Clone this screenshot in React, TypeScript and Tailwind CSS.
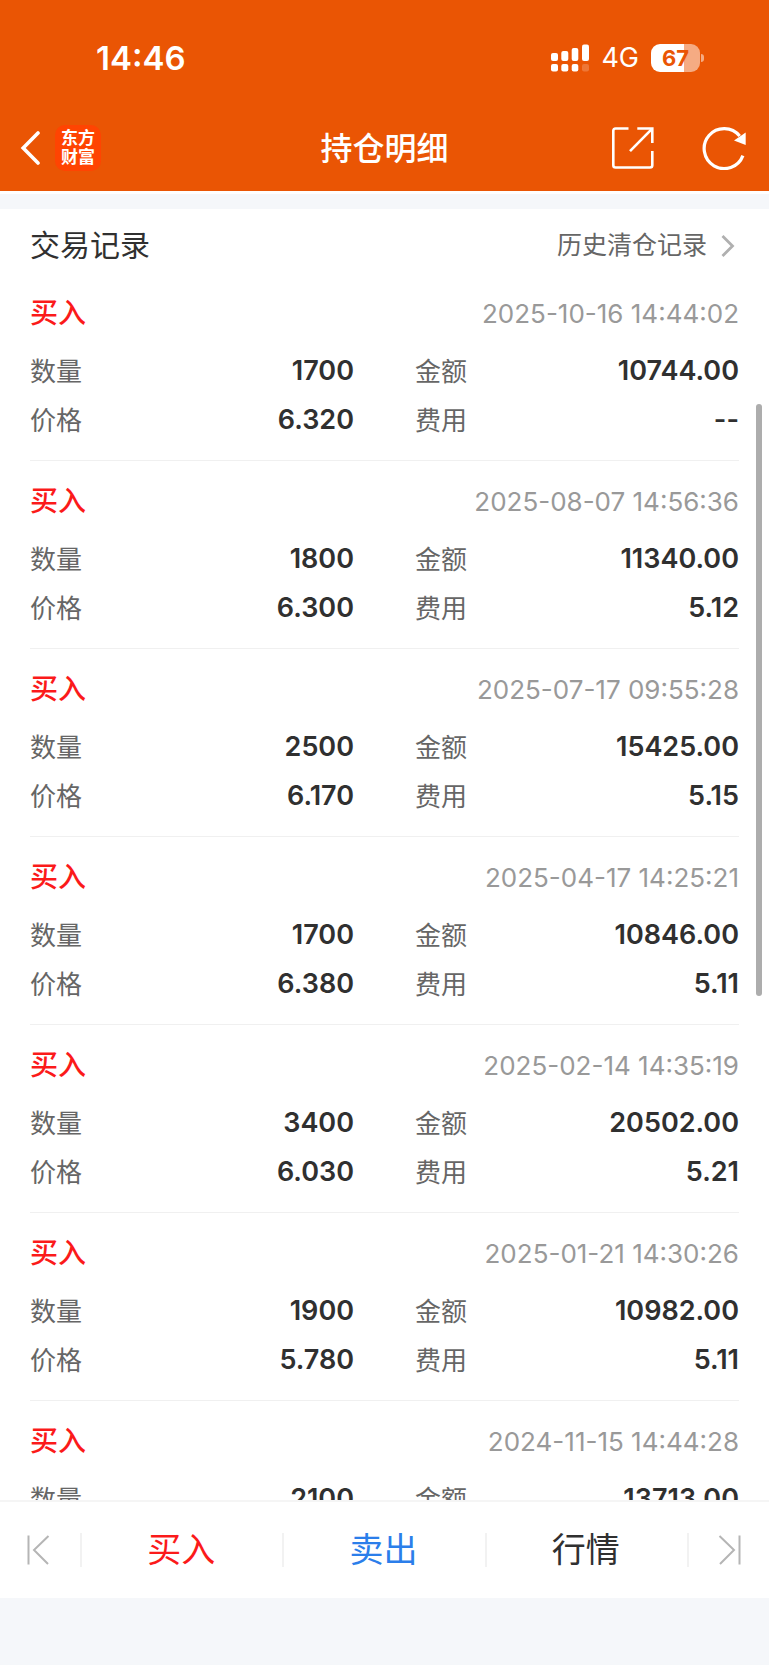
import React from "react";

type Trade = {
  time: string;
  quantity: string;
  amount: string;
  price: string;
  fee: string;
};

const trades: Trade[] = [
  { time: "2025-10-16 14:44:02", quantity: "1700", amount: "10744.00", price: "6.320", fee: "--" },
  { time: "2025-08-07 14:56:36", quantity: "1800", amount: "11340.00", price: "6.300", fee: "5.12" },
  { time: "2025-07-17 09:55:28", quantity: "2500", amount: "15425.00", price: "6.170", fee: "5.15" },
  { time: "2025-04-17 14:25:21", quantity: "1700", amount: "10846.00", price: "6.380", fee: "5.11" },
  { time: "2025-02-14 14:35:19", quantity: "3400", amount: "20502.00", price: "6.030", fee: "5.21" },
  { time: "2025-01-21 14:30:26", quantity: "1900", amount: "10982.00", price: "5.780", fee: "5.11" },
  { time: "2024-11-15 14:44:28", quantity: "2100", amount: "13713.00", price: "6.530", fee: "5.14" },
];

function SignalIcon() {
  return (
    <svg width="38" height="28" viewBox="0 0 38 28" fill="currentColor" aria-hidden="true">
      <rect x="0" y="9" width="7" height="8" rx="2" />
      <rect x="10.3" y="7" width="7" height="10" rx="2" />
      <rect x="20.7" y="4" width="6.6" height="13" rx="2" />
      <rect x="31" y="0.5" width="7" height="16.5" rx="2" />
      <rect x="0" y="20" width="7" height="7.5" rx="2" />
      <rect x="10.3" y="20" width="7" height="7.5" rx="2" />
      <rect x="20.7" y="20" width="6.6" height="7.5" rx="2" />
      <rect x="31" y="20" width="7" height="7.5" rx="2" opacity="0.2" />
    </svg>
  );
}

function Battery() {
  return (
    <div className="flex items-center gap-px">
      <div className="flex h-7 w-[49px] items-center justify-center rounded-[9px] bg-[linear-gradient(to_right,#fff_67%,#f5ab83_67%)] text-[22px] leading-none font-bold text-[#ea5504]">
        67
      </div>
      <div className="h-2 w-[3px] rounded-r-full bg-[#f5ab83]" />
    </div>
  );
}

function StatusBar() {
  return (
    <div className="flex h-[116px] items-center justify-between pr-[65px] pl-24">
      <span className="text-[33px] leading-10 font-semibold">14:46</span>
      <div className="flex items-center">
        <SignalIcon />
        <span className="mr-3 ml-3 text-[27px] leading-8">4G</span>
        <Battery />
      </div>
    </div>
  );
}

function NavBar() {
  return (
    <div className="grid h-[75px] grid-cols-[1fr_auto_1fr] items-start px-5">
      <div className="flex h-16 items-center gap-[15px]">
        <button type="button" aria-label="返回">
          <svg width="20" height="36" viewBox="0 0 20 36" fill="none" stroke="currentColor" strokeWidth="3.6" strokeLinecap="round" strokeLinejoin="miter" aria-hidden="true">
            <path d="M18 3 L3.2 18 L18 33" />
          </svg>
        </button>
        <div className="flex size-[46px] flex-col items-center justify-center rounded-[10px] bg-[#ff4402] text-[17px] leading-[19px] font-bold">
          <span>东方</span>
          <span>财富</span>
        </div>
      </div>
      <h1 className="text-[32px] leading-[66px] font-medium">持仓明细</h1>
      <div className="flex h-16 items-center justify-end gap-[47px]">
        <button type="button" aria-label="分享">
          <svg width="44" height="44" viewBox="0 0 44 44" fill="none" stroke="currentColor" strokeWidth="2.6" aria-hidden="true">
            <path d="M17.5 2.5 H4.6 Q2.3 2.5 2.3 4.8 V39.2 Q2.3 41.5 4.6 41.5 H39 Q41.3 41.5 41.3 39.2 V25" />
            <path d="M26.3 2.5 H41.3 V17" />
            <path d="M41 2.8 L19 25.2" />
          </svg>
        </button>
        <button type="button" aria-label="刷新">
          <svg width="47" height="44" viewBox="0 0 47 44" fill="none" aria-hidden="true">
            <path d="M40.9 29.6 A20 20 0 1 1 37.7 10" stroke="currentColor" strokeWidth="3.2" />
            <path d="M43.7 6.5 V19 L32 14.6 Z" fill="currentColor" />
          </svg>
        </button>
      </div>
    </div>
  );
}

function Field({ label, value }: { label: string; value: string }) {
  return (
    <div className="flex h-[49px] items-center justify-between">
      <dt className="text-[26px] text-[#666]">{label}</dt>
      <dd className="text-[27px] font-semibold text-[#303030]">{value}</dd>
    </div>
  );
}

function TradeItem({ trade }: { trade: Trade }) {
  return (
    <li className="border-b border-[#f0f0f0] pt-5 pb-[15px]">
      <div className="flex h-10 items-center justify-between">
        <span className="text-[28px] font-medium text-[#fb1a1a]">买入</span>
        <time className="text-[26px] text-[#999]">{trade.time}</time>
      </div>
      <dl className="mt-3.5 grid grid-cols-2 gap-x-[61px]">
        <Field label="数量" value={trade.quantity} />
        <Field label="金额" value={trade.amount} />
        <Field label="价格" value={trade.price} />
        <Field label="费用" value={trade.fee} />
      </dl>
    </li>
  );
}

function BottomBar() {
  const action = "h-[34px] flex-1 border-r-2 border-[#f2f2f2] pr-0.5 text-[34px] leading-[34px]";
  return (
    <nav className="flex h-[98px] shrink-0 items-center border-t-2 border-[#f5f5f5] bg-white">
      <button type="button" aria-label="上一个" className="flex h-[34px] w-[82px] items-center border-r-2 border-[#f2f2f2] pl-[26px] text-[#b5b5b5]">
        <svg width="24" height="30" viewBox="0 0 24 30" fill="none" stroke="currentColor" strokeWidth="2" aria-hidden="true">
          <path d="M2.5 0.5 V29.5 M22.5 1 L8 15 L22 29" />
        </svg>
      </button>
      <button type="button" className={`${action} text-[#fb1a1a]`}>买入</button>
      <button type="button" className={`${action} text-[#2b7eea]`}>卖出</button>
      <button type="button" className={`${action} text-[#303030]`}>行情</button>
      <button type="button" aria-label="下一个" className="flex h-[34px] w-20 items-center justify-end pr-[27px] text-[#b5b5b5]">
        <svg width="24" height="30" viewBox="0 0 24 30" fill="none" stroke="currentColor" strokeWidth="2" aria-hidden="true">
          <path d="M21.5 0.5 V29.5 M1.5 1 L16 15 L2 29" />
        </svg>
      </button>
    </nav>
  );
}

export default function App() {
  return (
    <div className="flex h-screen flex-col bg-[#f5f7fa] font-['Inter','Noto_Sans_CJK_SC',sans-serif]">
      <header className="shrink-0 bg-[#ea5504] text-white">
        <StatusBar />
        <NavBar />
      </header>
      <main className="relative flex min-h-0 flex-1 flex-col border-t-3 border-white">
        <div className="min-h-0 flex-1 overflow-y-auto pt-[15px] [scrollbar-width:none]">
          <section className="bg-white px-[30px] pt-[9px]">
            <div className="flex h-[55px] items-center justify-between">
              <h2 className="text-[30px] text-[#303030]">交易记录</h2>
              <a href="#history" className="flex items-center gap-[13px] pr-[3px] text-[25px] text-[#666]">
                历史清仓记录
                <svg width="16" height="24" viewBox="0 0 16 24" fill="none" stroke="#b0b0b0" strokeWidth="2.8" aria-hidden="true">
                  <path d="M2.5 2 L12.5 12 L2.5 22" />
                </svg>
              </a>
            </div>
            <ul>
              {trades.map((trade) => (
                <TradeItem key={trade.time} trade={trade} />
              ))}
            </ul>
          </section>
        </div>
        <div className="absolute top-[210px] right-[7px] h-[592px] w-1.5 rounded-full bg-[#adadad]" />
      </main>
      <BottomBar />
      <div className="h-[67px] shrink-0" />
    </div>
  );
}
